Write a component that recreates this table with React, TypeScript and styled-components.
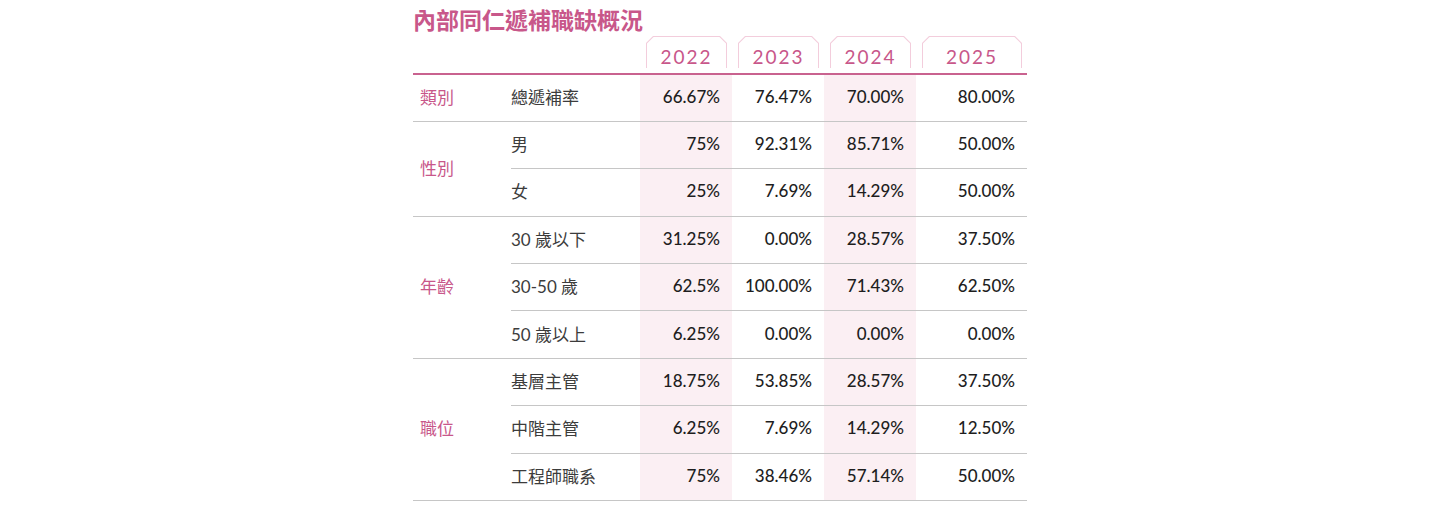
import styled, { createGlobalStyle } from 'styled-components'

const GlobalStyle = createGlobalStyle`
  html, body {
    margin: 0;
    padding: 0;
    background: #ffffff;
  }
  body {
    font-family: Lato, "Noto Sans CJK TC", sans-serif;
  }
`

type Row = {
  label: string
  values: string[]
}

type Group = {
  category: string
  rows: Row[]
}

const years = ['2022', '2023', '2024', '2025']
const columnWidths = [98, 129, 92, 92, 92, 111]

const groups: Group[] = [
  {
    category: '類別',
    rows: [{ label: '總遞補率', values: ['66.67%', '76.47%', '70.00%', '80.00%'] }],
  },
  {
    category: '性別',
    rows: [
      { label: '男', values: ['75%', '92.31%', '85.71%', '50.00%'] },
      { label: '女', values: ['25%', '7.69%', '14.29%', '50.00%'] },
    ],
  },
  {
    category: '年齡',
    rows: [
      { label: '30 歲以下', values: ['31.25%', '0.00%', '28.57%', '37.50%'] },
      { label: '30-50 歲', values: ['62.5%', '100.00%', '71.43%', '62.50%'] },
      { label: '50 歲以上', values: ['6.25%', '0.00%', '0.00%', '0.00%'] },
    ],
  },
  {
    category: '職位',
    rows: [
      { label: '基層主管', values: ['18.75%', '53.85%', '28.57%', '37.50%'] },
      { label: '中階主管', values: ['6.25%', '7.69%', '14.29%', '12.50%'] },
      { label: '工程師職系', values: ['75%', '38.46%', '57.14%', '50.00%'] },
    ],
  },
]

const App = () => {
  return (
    <>
      <GlobalStyle />
      <StyledWrapper>
        <StyledTitle>內部同仁遞補職缺概況</StyledTitle>
        <StyledTable>
          <colgroup>
            {columnWidths.map((width, i) => (
              <StyledCol key={i} $width={width} />
            ))}
          </colgroup>
          <thead>
            <tr>
              <StyledHeadCell />
              <StyledHeadCell />
              {years.map((year) => (
                <StyledHeadCell key={year}>
                  <StyledTab>
                    <StyledTabInner>{year}</StyledTabInner>
                  </StyledTab>
                </StyledHeadCell>
              ))}
            </tr>
          </thead>
          <tbody>
            {groups.map((group) =>
              group.rows.map((row, index) => (
                <StyledRow key={group.category + row.label}>
                  {index === 0 && (
                    <StyledCategory rowSpan={group.rows.length}>
                      {group.category}
                    </StyledCategory>
                  )}
                  <StyledLabel>{row.label}</StyledLabel>
                  {row.values.map((value, i) => (
                    <StyledValue key={years[i]} $shaded={i % 2 === 0}>
                      {value}
                    </StyledValue>
                  ))}
                </StyledRow>
              ))
            )}
          </tbody>
        </StyledTable>
      </StyledWrapper>
    </>
  )
}

export default App

const StyledWrapper = styled.div`
  width: 614px;
  margin: 0 auto;
  padding-top: 4px;
`

const StyledTitle = styled.h2`
  margin: 0;
  font-family: "Noto Sans CJK TC", sans-serif;
  font-size: 23px;
  line-height: 30px;
  font-weight: 700;
  color: #c8578a;
`

const StyledTable = styled.table`
  width: 614px;
  border-collapse: collapse;
  table-layout: fixed;
`

const StyledCol = styled.col<{ $width: number }>`
  width: ${({ $width }) => $width}px;
`

const StyledRow = styled.tr`
  height: 47.4px;
`

const StyledHeadCell = styled.th`
  padding: 2px 5px 5px 6px;
  border-bottom: 2px solid #c9628f;
  vertical-align: bottom;
`

const StyledTab = styled.div`
  height: 31px;
  padding: 1px 1px 0 1px;
  background: #f3cddc;
  clip-path: polygon(7px 0, calc(100% - 7px) 0, 100% 7px, 100% 100%, 0 100%, 0 7px);
`

const StyledTabInner = styled.div`
  height: 100%;
  background: #ffffff;
  clip-path: polygon(6.6px 0, calc(100% - 6.6px) 0, 100% 6.6px, 100% 100%, 0 100%, 0 6.6px);
  display: flex;
  align-items: flex-end;
  justify-content: center;
  box-sizing: border-box;
  font-family: Lato, sans-serif;
  font-size: 19px;
  font-weight: 400;
  letter-spacing: 2px;
  color: #c8578a;
`

const StyledCategory = styled.td`
  padding: 0 0 3px 7px;
  border-bottom: 1px solid #c6c6c6;
  font-family: "Noto Sans CJK TC", sans-serif;
  font-size: 17px;
  color: #c8578a;
  vertical-align: middle;
`

const StyledLabel = styled.td`
  padding: 0 0 3px 0;
  border-bottom: 1px solid #c6c6c6;
  font-family: Lato, "Noto Sans CJK TC", sans-serif;
  font-size: 17px;
  color: #3c3c3c;
  vertical-align: middle;
`

const StyledValue = styled.td<{ $shaded: boolean }>`
  padding: 0 12px 3px 0;
  border-bottom: 1px solid #c6c6c6;
  background: ${({ $shaded }) => ($shaded ? '#fbeff3' : 'transparent')};
  font-family: Lato, sans-serif;
  font-size: 17px;
  font-weight: 500;
  color: #1e1e1e;
  text-align: right;
  vertical-align: middle;
`
